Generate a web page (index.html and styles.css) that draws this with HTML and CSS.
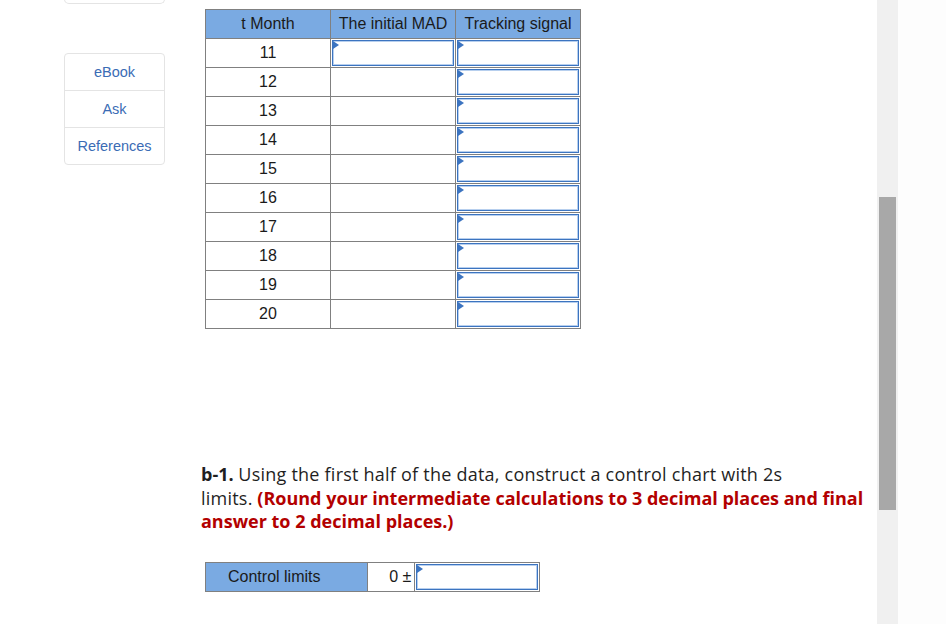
FILE: index.html
```html
<!DOCTYPE html>
<html>
<head>
<meta charset="utf-8">
<link rel="stylesheet" href="styles.css">
</head>
<body>
<div class="frame">
  <div class="page">
    <aside class="sidebar">
      <div class="topbox"></div>
      <div class="btns">
        <div class="btn">eBook</div>
        <div class="btn">Ask</div>
        <div class="btn">References</div>
      </div>
    </aside>
    <main class="content">
      <table class="grid main">
        <thead>
          <tr><th>t Month</th><th>The initial MAD</th><th>Tracking signal</th></tr>
        </thead>
        <tbody>
          <tr><td class="num">11</td><td class="in"><div class="inp"></div></td><td class="in"><div class="inp"></div></td></tr>
          <tr><td class="num">12</td><td></td><td class="in"><div class="inp"></div></td></tr>
          <tr><td class="num">13</td><td></td><td class="in"><div class="inp"></div></td></tr>
          <tr><td class="num">14</td><td></td><td class="in"><div class="inp"></div></td></tr>
          <tr><td class="num">15</td><td></td><td class="in"><div class="inp"></div></td></tr>
          <tr><td class="num">16</td><td></td><td class="in"><div class="inp"></div></td></tr>
          <tr><td class="num">17</td><td></td><td class="in"><div class="inp"></div></td></tr>
          <tr><td class="num">18</td><td></td><td class="in"><div class="inp"></div></td></tr>
          <tr><td class="num">19</td><td></td><td class="in"><div class="inp"></div></td></tr>
          <tr><td class="num">20</td><td></td><td class="in"><div class="inp"></div></td></tr>
        </tbody>
      </table>
      <p class="question"><b>b-1.</b> <span class="reg">Using the first half of the data, construct a control chart with 2s</span><br><span class="reg">limits.</span> <span class="hint">(Round your intermediate calculations to 3 decimal places and final</span><br><span class="hint">answer to 2 decimal places.)</span></p>
      <table class="grid limits">
        <tr><th class="lab">Control limits</th><td class="pm">0 ±</td><td class="in"><div class="inp"></div></td></tr>
      </table>
    </main>
  </div>
  <div class="scroll"><div class="thumb"></div></div>
  <div class="outside"></div>
</div>
</body>
</html>
```
FILE: styles.css
```css
html, body { margin: 0; padding: 0; background: #fff; }
body { font-family: "Liberation Sans", Arial, sans-serif; color: #1a1a1a; }
.frame { display: flex; width: 946px; height: 624px; overflow: hidden; }
.page { width: 877px; display: flex; background: #fff; }
.sidebar { width: 101px; margin-left: 64px; flex: none; }
.topbox { height: 4px; border: 1px solid #e4e4e4; border-top: none; border-radius: 0 0 6px 6px; margin-top: -1px; }
.btns { margin-top: 49px; border: 1px solid #e4e4e4; border-radius: 4px; }
.btn { height: 36px; line-height: 36px; text-align: center; font-size: 14.5px; color: #3b6cb5; border-top: 1px solid #e4e4e4; }
.btn:first-child { border-top: none; }
.content { margin-left: 40px; padding-top: 9px; }
.grid { border-collapse: collapse; font-size: 16px; table-layout: fixed; }
.grid th, .grid td { border: 1px solid #808080; padding: 0; height: 28px; }
.grid th { background: #7aaae2; font-weight: normal; text-align: center; color: #1a1a1a; }
.grid td { text-align: center; }
.main { width: 376px; }
.main th { width: 124px; }
.grid td.in { padding: 1px; height: 26px; }
.inp { position: relative; height: 26px; border: 1px solid #3c74c0; box-shadow: inset 0 0 0 1px #b7cfee; box-sizing: border-box; background: #fff; }
.inp::before { content: ""; position: absolute; left: 0; top: 0; border-left: 6px solid #3c74c0; border-top: 4px solid transparent; border-bottom: 4px solid transparent; }
.question { margin: 134px 0 0 -4px; width: 680px; font-family: "Open Sans", Lato, sans-serif; font-size: 18px; line-height: 23.5px; color: #1f1f1f; white-space: nowrap; }
.question b { font-weight: bold; }
.reg { letter-spacing: 0.23px; }
.hint { color: #b30000; font-weight: bold; }
.limits { margin-top: 28px; width: 335px; }
.limits th.lab { width: 161px; text-align: left; padding-left: 22px; box-sizing: border-box; }
.limits td.pm { width: 47px; text-align: right; padding-right: 3px; box-sizing: border-box; }
.limits td.in { width: 121px; }
.scroll { width: 21px; background: #f0f0f0; flex: none; position: relative; }
.thumb { position: absolute; left: 2px; right: 2px; top: 197px; height: 313px; background: #a8a8a8; }
.outside { flex: 1; background: #fdfdfd; }
```
